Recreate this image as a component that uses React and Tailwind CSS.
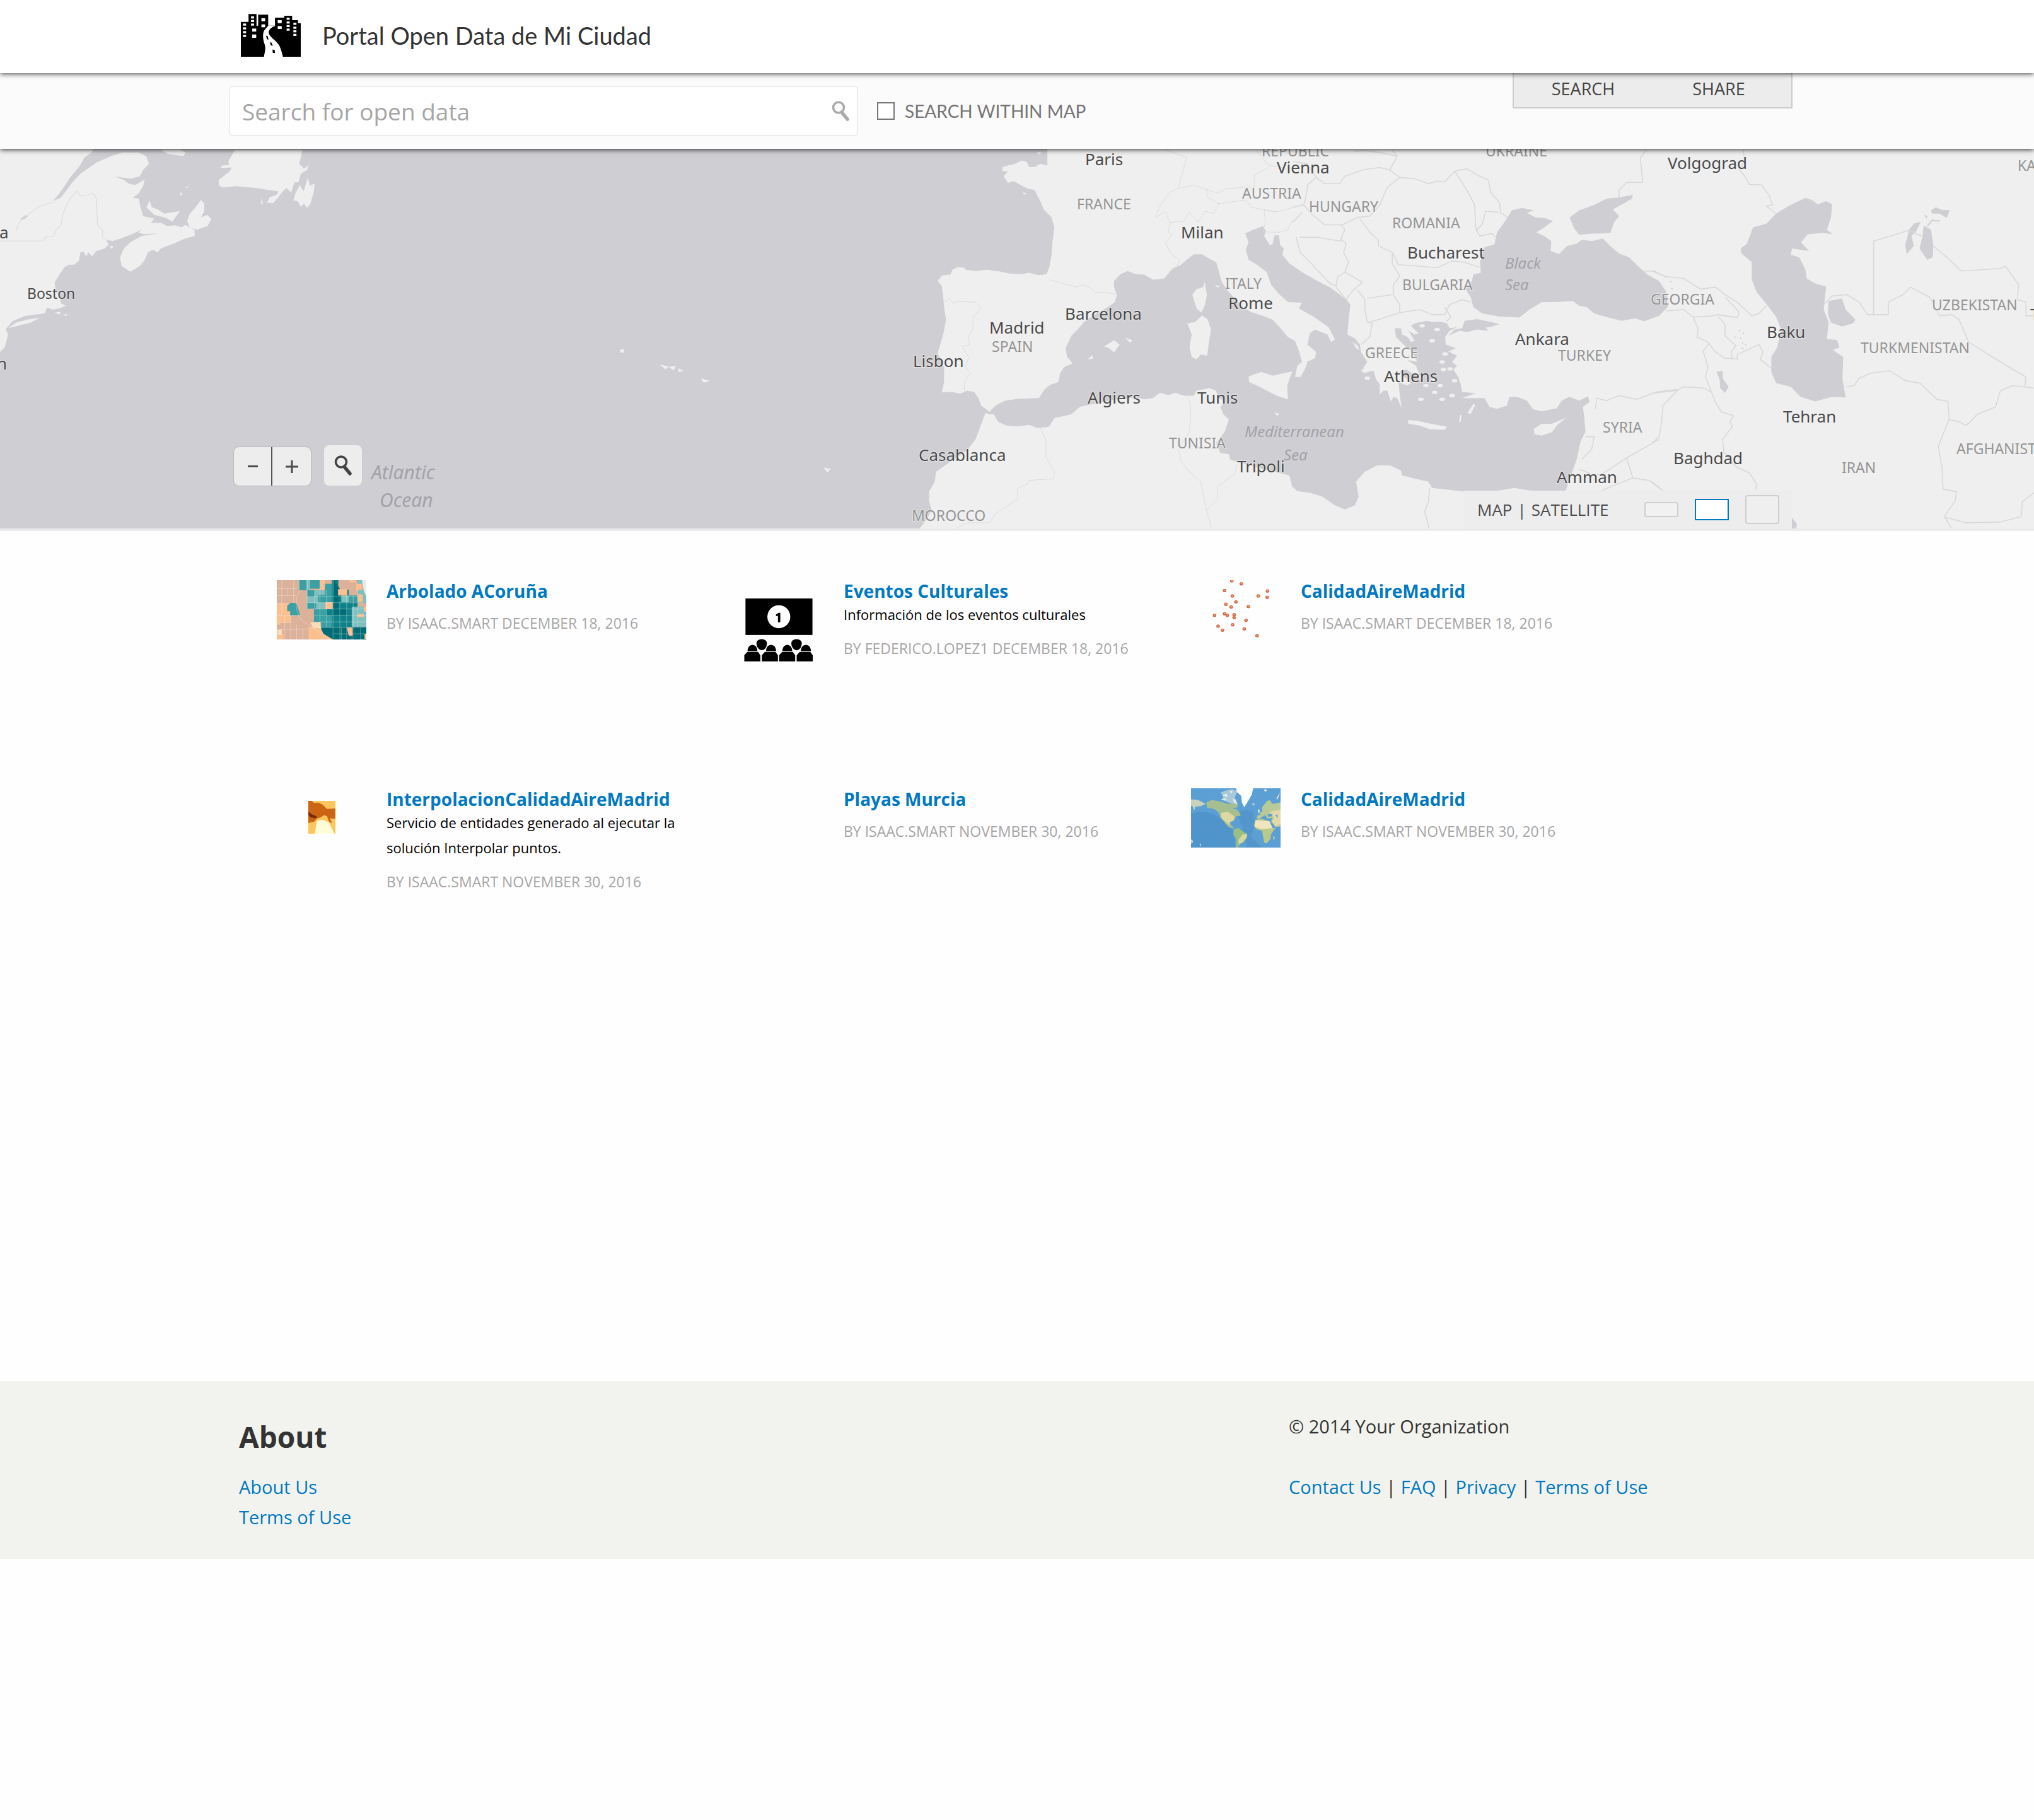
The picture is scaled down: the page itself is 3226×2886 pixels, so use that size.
import React from "react";

const BORDER = { fill: "none", stroke: "#d8d8da", strokeWidth: 2, strokeLinejoin: "round" };

function Logo() {
  const windows = [
    [94, 112], [94, 130], [94, 148], [94, 166],
    [120, 78], [120, 95], [120, 112],
    [124, 136, 13, 14], [124, 164, 13, 16],
    [154, 87, 12, 14], [154, 116, 12, 14],
    [207, 96, 13, 14], [207, 124, 13, 14],
    [236, 84], [236, 102], [236, 119], [236, 136],
    [258, 108], [258, 127], [258, 144], [258, 161],
  ];
  return (
    <svg className="h-[68px] w-[95px]" viewBox="87 66 195 204" preserveAspectRatio="none" role="img" aria-label="Mi Ciudad">
      <path d="M87 104H112V67H138V122H143V70H176V122H198V84H228V75H254V96H273V110H282V270H87Z" fill="#000" />
      <path d="M139 67V122H143V70Z" fill="#fff" />
      <path d="M176 122H200C182 132 173 148 180 165C188 185 205 195 213 220C219 238 221 255 224 270H162C165 245 170 230 163 205C158 180 157 150 167 138Z" fill="#fff" />
      {windows.map(([x, y, w = 10, h = 10]) => (
        <rect key={`${x}-${y}`} x={x} y={y} width={w} height={h} fill="#fff" />
      ))}
      <path d="M169 170L174 171L177 188L172 187ZM182 200L187 203L191 218L184 215ZM190 236L197 237L198 253L191 252Z" fill="#000" />
    </svg>
  );
}

function Magnifier({ className }) {
  return (
    <svg className={className} viewBox="0 0 28 32" fill="none" stroke="currentColor" aria-hidden="true">
      <circle cx="11" cy="10.500" r="8.500" strokeWidth="3.600" />
      <path d="M16 18L25 29" strokeWidth="5.500" strokeLinecap="round" />
    </svg>
  );
}

const CITIES = [
  ["Paris", 1721, 26], ["Milan", 1873, 142], ["Rome", 1948, 254], ["Madrid", 1569, 293],
  ["Barcelona", 1689, 271], ["Lisbon", 1448, 346], ["Algiers", 1725, 404], ["Tunis", 1899, 404],
  ["Casablanca", 1457, 495], ["Tripoli", 1962, 513], ["Vienna", 2025, 39], ["Bucharest", 2232, 174],
  ["Athens", 2195, 370], ["Ankara", 2403, 311], ["Amman", 2469, 530], ["Volgograd", 2645, 32],
  ["Baku", 2802, 300], ["Tehran", 2828, 434], ["Baghdad", 2654, 500], ["T", 3220, 272],
  ["a", -1, 142], ["n", -5, 350],
];

const COUNTRIES = [
  ["FRANCE", 1708, 96], ["ITALY", 1943, 222], ["SPAIN", 1573, 322], ["TUNISIA", 1854, 475],
  ["MOROCCO", 1446, 590], ["REPUBLIC", 2001, 12], ["AUSTRIA", 1970, 79], ["HUNGARY", 2076, 100],
  ["ROMANIA", 2208, 126], ["BULGARIA", 2224, 224], ["GREECE", 2165, 332], ["TURKEY", 2471, 336],
  ["SYRIA", 2542, 450], ["UKRAINE", 2356, 12], ["KA", 3200, 35], ["GEORGIA", 2618, 247],
  ["UZBEKISTAN", 3064, 256], ["TURKMENISTAN", 2951, 324], ["IRAN", 2921, 514], ["AFGHANIST", 3103, 484],
];

const WATERS = [
  ["Mediterranean", 1974, 457], ["Sea", 2036, 494], ["Black", 2387, 190], ["Sea", 2387, 224],
];

const AEGEAN = [
  [520, 725], [580, 740], [560, 785], [612, 838], [600, 870], [605, 900], [632, 898], [650, 945],
  [570, 992], [515, 1020], [600, 1020], [560, 945], [592, 965], [640, 1005], [535, 965], [288, 905], [300, 935],
];

const CASPIAN_DOTS = [[360, 745], [375, 755], [340, 770], [365, 775], [372, 795], [385, 800], [372, 815], [78, 548], [82, 575]];

/* Light grey canvas basemap. Each sheet carries its own grid, projected into map space by its group. */
function Basemap() {
  return (
    <svg className="absolute inset-0 h-full w-full" viewBox="0 0 3226 602" preserveAspectRatio="xMidYMid slice" role="img" aria-label="Map">
      <rect width="3226" height="602" fill="#cfced3" />

      {/* North American seaboard */}
      <g transform="translate(0 -6) scale(.5102 .3954)">
        <g fill="#efefef">
          <path d="M0 0L300 0L285 30L262 50L250 80L218 130L190 185L165 225L190 210L225 150L250 115L300 70L345 45L380 30L430 30L455 45L463 75L445 100L435 125L405 135L355 125L385 140L400 155L420 160L435 150L450 138L445 165L430 195L413 212L432 215L435 240L445 285L480 295L470 310L465 330L445 335L430 345L405 360L375 375L350 385L330 380L338 400L325 415L300 425L286 447L275 430L268 447L260 428L250 430L245 465L230 480L215 480L200 490L185 520L170 550L172 580L185 610L190 635L205 645L185 655L165 660L145 652L140 675L80 685L40 705L18 738L25 760L15 810L0 830Z" />
          <path d="M430 350L465 312L500 312L520 325L545 322L565 330L575 320L605 340L605 365L575 375L540 395L500 415L490 430L475 420L460 430L450 460L435 485L405 508L390 495L378 485L373 450L385 415L405 390L440 365L490 355L445 357Z" />
          <path d="M625 220L635 235L635 265L625 290L645 280L657 297L645 325L612 340L590 330L582 305L590 275L605 255Z" />
          <path d="M465 222L472 250L490 258L510 275L560 265L545 290L535 308L525 298L510 290L480 280L455 250Z" />
          <path d="M730 20L940 20L935 50L930 75L945 95L960 80L955 100L935 115L928 150L915 150L905 190L890 172L878 187L868 205L850 232L830 232L838 210L860 200L865 185L825 178L795 172L735 165L690 170L680 160L680 140L715 105L720 90L685 92L690 82L712 80L710 65Z" />
          <path d="M957 130L963 163L978 155L975 190L965 235L955 252L945 235L935 248L925 225L912 222L918 195L932 160L944 185Z" />
          <path d="M500 18L520 35L570 45L577 30L560 18Z" />
          <path d="M25 735L50 712L85 700L125 692L95 712L55 725ZM170 672L190 668L185 680ZM195 680L210 678L205 686ZM812 212L818 238L812 238ZM575 168L588 166L583 172ZM562 185L567 200L560 202ZM340 405L352 405L348 417Z" />
        </g>
        <path d="M62 298L78 282L88 284L75 298Z" fill="#cfced3" />
        <path d="M0 385L135 385L145 365L165 365L175 340L190 320L195 280L205 245L220 210L240 185L250 205L275 200L288 192L300 215L303 320L318 340L320 370L338 385M165 228L120 248L85 280L60 310L50 345" {...BORDER} />
      </g>

      {/* Azores and Madeira */}
      <g fill="#efefef">
        <path d="M984 318h6v5h-6zM1046 342l14 3-4 5zM1060 346l12-2-3 7zM1076 348l8 4-8 2zM1112 364l14 4-10 3zM1306 505l12 3-6 5z" />
      </g>

      {/* Western Mediterranean */}
      <g transform="translate(1400 -6) scale(.4464 .3954)">
        <g fill="#efefef">
          <path d="M585 0L585 82L560 75L540 88L520 88L512 68L495 62L470 75L425 88L425 105L445 105L430 125L445 152L465 145L490 160L515 175L540 180L550 205L560 225L572 258L600 290L610 330L603 390L600 440L592 490L582 518L555 522L520 512L495 518L450 515L420 508L370 500L330 505L295 500L290 492L265 490L248 500L240 520L212 522L195 545L210 565L215 610L218 650L225 700L215 760L195 835L218 890L218 950L210 992L245 990L275 997L300 985L325 990L340 1015L350 1045L380 1070L400 1045L435 1025L480 1018L555 1015L575 980L595 962L625 950L630 915L645 890L675 875L655 850L650 815L670 765L700 730L715 710L760 675L800 650L825 630L832 600L822 570L822 545L845 518L870 505L900 518L930 520L960 540L1000 535L1030 495L1060 480L1080 460L1105 438L1135 438L1160 455L1185 470L1195 510L1205 550L1230 590L1255 620L1280 650L1310 670L1350 685L1385 700L1410 730L1440 770L1465 785L1480 830L1490 870L1473 885L1465 930L1484 930L1500 900L1509 868L1536 855L1540 830L1509 800L1518 755L1536 740L1580 760L1593 790L1607 780L1584 730L1530 688L1478 655L1490 632L1440 630L1410 600L1380 560L1365 510L1330 480L1300 460L1290 420L1300 390L1288 355L1310 343L1350 325L1362 345L1355 365L1375 400L1385 398L1392 362L1408 362L1412 400L1425 415L1420 440L1445 475L1491 510L1545 545L1589 570L1589 0Z" />
          <path d="M380 1080L365 1075L350 1120L330 1180L300 1225L240 1270L190 1310L185 1350L165 1390L165 1430L175 1465L150 1510L130 1540L130 1568L1568 1568L1568 1415L1520 1400L1475 1390L1455 1370L1445 1325L1400 1312L1350 1300L1290 1280L1235 1262L1230 1240L1200 1235L1185 1195L1215 1150L1230 1100L1210 1080L1200 1050L1215 1030L1190 1010L1185 985L1160 975L1115 985L1105 1005L1070 1005L1040 993L1015 1003L985 993L960 1015L930 1020L900 1012L830 1020L760 1035L700 1050L670 1080L610 1095L590 1130L550 1135L520 1122L480 1128L440 1125L410 1110L395 1080Z" />
          <path d="M1143 548L1152 600L1145 640L1133 672L1115 655L1100 600L1115 578L1138 570Z" />
          <path d="M1135 683L1155 700L1166 740L1158 800L1153 845L1130 840L1115 860L1098 850L1090 810L1098 760L1082 715L1110 710Z" />
          <path d="M1300 928L1345 910L1385 925L1455 908L1437 965L1440 1020L1400 1005L1340 970L1302 950Z" />
          <path d="M787 808L822 783L842 800L822 832L805 815ZM860 772L887 782L880 793ZM728 860L745 843L747 857ZM1392 1072L1410 1078L1402 1086ZM1180 562L1200 565L1190 572ZM548 28L565 30L555 38ZM498 188L510 195L502 200Z" />
        </g>
        <path d="M590 540L640 555L690 570L710 560L740 575L755 590L780 590L830 598M218 630L238 616L250 635L265 628L330 630L350 655L322 690L320 740L305 770L308 800L285 808L305 850L295 890L312 915L290 950L290 985M1005 20L1080 50L1065 110L1050 172L1020 190L985 245L970 290L1005 268L1020 310L1015 350L1028 360L1005 390L1020 430L1055 465L1045 485M1050 175L1105 160L1150 178L1155 210L1195 235L1175 275L1145 265L1120 310L1090 270L1070 305L1020 310M1150 178L1190 193L1220 175L1280 170L1320 168L1320 120L1370 90M1195 235L1290 220L1310 250L1400 268L1490 240L1505 190L1540 140M1400 268L1355 262L1360 310L1350 348L1410 350L1440 340L1450 310L1500 270M1330 25L1370 80L1440 95L1500 70L1456 65M560 1135L580 1180L580 1250L610 1310L605 1338L520 1345L515 1360L480 1375L480 1420L400 1480L380 1515L300 1515L260 1538M1085 1010L1095 1050L1090 1150L1050 1220L1060 1270L1090 1310L1130 1350L1150 1465L1168 1535M1260 1280L1250 1320L1190 1370L1190 1420L1150 1465" {...BORDER} />
      </g>

      {/* Eastern Mediterranean and Black Sea */}
      <g transform="translate(2050 -6) scale(.3954)">
        <g fill="#efefef">
          <path d="M0 0L0 480L40 510L100 545L150 570L190 600L215 620L232 640L225 700L220 760L250 775L270 800L275 830L300 870L285 890L285 915L325 905L335 940L350 960L350 1000L365 985L380 985L395 1030L405 1010L420 1015L438 1055L430 1000L425 950L460 965L475 955L430 910L455 900L490 920L520 945L505 910L495 885L460 862L500 870L480 830L445 800L415 770L410 735L435 735L440 760L462 770L475 790L490 785L465 745L490 760L505 755L475 725L490 715L540 705L560 710L590 708L620 715L630 735L660 730L630 745L612 770L615 800L655 815L625 828L660 845L640 870L660 885L645 900L665 930L675 960L680 990L735 995L680 1015L770 1015L790 1050L820 1058L860 1045L870 1010L900 1010L940 1025L965 1060L1000 1068L1060 1055L1080 1025L1110 1010L1150 1025L1185 1008L1192 1030L1165 1050L1170 1090L1175 1150L1155 1190L1140 1260L1115 1330L1095 1390L950 1385L890 1375L800 1390L690 1390L650 1385L560 1375L545 1350L500 1340L440 1325L435 1305L390 1285L340 1285L290 1310L255 1350L265 1410L250 1445L210 1462L170 1445L120 1410L70 1395L0 1385L0 1568L1568 1568L1568 0Z" />
        </g>
        <path d="M0 480L35 510L100 545L175 590L232 640L225 700L222 765L285 850L285 915L340 960L300 1100L0 1000Z" fill="none" />
      </g>
      <rect x="2610" width="616" height="602" fill="#efefef" />
      <g transform="translate(2050 -6) scale(.3954)">
        <g fill="#efefef">
          <path d="M463 1103L500 1106L540 1115L620 1130L610 1142L550 1140L510 1125L465 1118Z" />
          <path d="M702 1075L725 1038L733 1042L715 1078ZM668 1110L672 1080L678 1085L674 1110ZM968 1138L1000 1118L1040 1118L1098 1093L1060 1125L1040 1152L1000 1165L970 1160ZM240 790L262 805L268 822L255 815Z" />
          {AEGEAN.map(([x, y]) => (
            <ellipse key={`${x}-${y}`} cx={x} cy={y} rx="11" ry="7" />
          ))}
        </g>
        <g fill="#cfced3">
          <path d="M880 262L920 252L968 262L940 272L975 290L1010 292L1045 305L1010 330L978 350L1010 365L1038 385L1035 425L1070 437L1100 405L1140 395L1160 380L1200 385L1245 375L1275 405L1310 435L1350 450L1390 490L1425 520L1470 545L1500 590L1505 650L1470 685L1410 707L1375 695L1320 705L1260 690L1210 675L1180 650L1150 645L1125 625L1060 630L1000 630L950 660L910 692L870 690L830 688L760 675L725 650L715 610L695 580L720 545L725 520L755 512L752 470L770 410L810 398L820 350L850 310Z" />
          <path d="M1112 290L1150 262L1210 240L1260 215L1310 210L1365 200L1362 215L1310 245L1285 258L1310 285L1290 310L1275 352L1235 355L1205 355L1150 360L1130 335Z" />
          <path d="M625 765L650 740L680 735L690 705L740 698L790 708L830 718L800 728L775 732L785 745L740 740L700 750L670 745Z" />
        </g>
        <path d="M245 25L290 22L350 30L420 45M1420 20L1395 50L1405 150L1340 150L1310 180L1310 210M390 100L430 130L490 135L545 155L580 145L610 148L650 105L700 95L740 120L785 140L795 190L830 230L835 270L860 290M650 105L680 150L710 200L730 240L735 330L750 365L800 355L815 370M735 345L760 320L775 265L830 270M95 130L60 160L55 200L45 240L80 280L130 320L200 320L260 290L310 285L350 240L380 170L430 130M0 65L60 75L95 130L130 155L190 155L210 125L280 100L350 90L390 100L420 45L400 20M0 250L45 240M0 310L40 270M270 295L310 350L345 380L345 405L400 430L425 480L500 485L580 492L640 465L690 470L750 490M400 430L400 475L430 525L405 560L405 600L430 640L430 672M30 370L100 370L190 385L210 340L195 320M15 370L30 430L80 480L150 555L175 565L180 530L210 510L225 470L205 430L215 395L195 380M175 570L215 620L240 585L280 550L210 510M260 580L290 620L290 660L300 710L320 715L310 770L275 800M300 615L400 600M430 672L360 695L310 710M430 672L510 660L560 680L610 680L630 640L680 620L715 630M610 650L635 690L615 710M1215 1060L1220 1015L1260 1025L1310 1005L1380 1020L1460 990L1545 980M1340 1255L1240 1320M1340 1255L1470 1180M1340 1255L1365 1335L1240 1385M1365 1335L1430 1345L1485 1385M1175 1170L1210 1170L1200 1220L1160 1260M1150 1300L1200 1320L1240 1320M550 1375L545 1430L530 1470L548 1540M1410 505L1450 505L1500 530" {...BORDER} strokeWidth={4} />
      </g>

      {/* Caspian and Central Asia */}
      <g transform="translate(2620 -6) scale(.3865 .3954)">
        <g fill="#cfced3">
          <path d="M630 212L660 222L680 238L715 225L740 238L735 290L718 340L742 358L700 352L640 358L612 390L645 425L575 415L570 440L605 450L630 500L635 535L670 555L715 568L710 610L705 660L725 710L718 778L760 782L770 812L742 822L785 850L782 940L795 1012L740 1010L670 1028L610 1010L570 970L510 955L490 910L490 850L515 810L530 740L510 690L480 650L430 590L410 540L410 470L365 432L365 415L390 395L415 330L470 315L510 275L560 245Z" />
          <path d="M725 625L780 615L795 660L835 700L825 715L780 728L735 712L722 680Z" />
          <path d="M1075 315L1103 308L1085 345L1065 365L1075 405L1045 437L1040 400L1055 340Z" />
          <path d="M1115 322L1145 340L1155 400L1152 450L1130 460L1098 415L1110 370Z" />
          <path d="M1145 262L1165 250L1190 260L1222 262L1210 292L1180 275L1150 275ZM1118 280L1132 285L1125 295Z" />
          <path d="M265 910L290 905L290 935L315 970L300 994L280 975L278 940Z" />
          <path d="M540 1460L572 1490L595 1520L592 1538L540 1538Z" />
          {CASPIAN_DOTS.map(([x, y]) => (
            <circle key={`${x}-${y}`} cx={x} cy={y} r="3" />
          ))}
        </g>
        <path d="M1130 325L1150 302L1182 305" {...BORDER} stroke="#cfced3" strokeWidth={5} />
        <path d="M375 20L380 60L360 100L385 130L400 158L450 160L480 200L495 240L470 245L510 275M0 505L60 528L130 535L200 578L260 570L300 600L350 630L410 685L440 675L470 645M60 665L130 660L170 690L250 685L270 680L350 692L358 670L335 645L300 610M170 690L190 740L185 770L230 790L260 830L300 855L350 858L350 840L440 800L455 830L445 860L490 895M270 685L300 720L300 765L345 805L325 830L330 858M235 795L210 825L230 890L220 930L240 980L260 1030L285 1070L335 1085L320 1110L330 1130L290 1180L295 1230L345 1290L400 1315L430 1360L425 1382M0 995L100 985L130 970L215 975L240 990M105 985L45 1045L40 1110L30 1170L0 1195M795 970L830 965L850 935L900 915L975 905L1040 945L1100 955L1170 1020L1215 1028L1220 1100L1195 1160L1175 1210L1190 1290L1195 1380L1250 1390L1245 1425L1200 1490L1228 1535M1220 1100L1260 1110L1290 1125L1335 1080L1410 1050L1430 985L1480 965L1530 970L1568 975M1530 970L1535 930L1430 870L1300 790L1260 700L1230 680L1180 685L1140 610L1060 570L1030 600L970 630L970 680L885 680L850 630L800 600L740 605L705 640M910 680L910 385L1055 342L1105 365M1155 405L1210 450L1270 505L1430 495L1450 485L1505 560L1500 620L1535 630L1535 685L1568 685M1200 1492L1290 1515L1430 1512L1515 1490L1520 1430L1568 1395M0 1350L45 1385" {...BORDER} strokeWidth={4} />
      </g>

      <g fontFamily="'Noto Sans', sans-serif" paintOrder="stroke" stroke="#f2f2f2" strokeOpacity=".7" strokeWidth="2">
        <g fill="#a3a3a8" stroke="none" fontStyle="italic" fontSize="24">
          {WATERS.map(([name, x, y]) => (
            <text key={`${name}-${x}`} x={x} y={y}>{name}</text>
          ))}
        </g>
        <g fill="#a3a3a8" stroke="none" fontStyle="italic" fontSize="30">
          <text x="589" y="524">Atlantic</text>
          <text x="602" y="568">Ocean</text>
        </g>
        <g fill="#949494" fontSize="23">
          {COUNTRIES.map(([name, x, y]) => (
            <text key={name} x={x} y={y}>{name}</text>
          ))}
        </g>
        <g fill="#4a4a4a" fontSize="26">
          {CITIES.map(([name, x, y]) => (
            <text key={name} x={x} y={y}>{name}</text>
          ))}
          <text x="43" y="238" fontSize="23">Boston</text>
        </g>
      </g>
    </svg>
  );
}

const BLOCKS = [
  ["#fcbf8f", "M83 150H140V270H83ZM83 215H118V300H83ZM83 270H165V310H83ZM140 112H158V132H140Z"],
  ["#dbb19a", "M83 112H140V215H83ZM130 112H185V160H130ZM148 155H185V240H228V268H165L155 230ZM95 300H190V375H95ZM130 270H175V310H130ZM295 112H350V155H295ZM245 112H275V130H245Z"],
  ["#fcbf8f", "M190 320L235 330L272 375H190ZM228 112H245V155H228ZM350 125H368V160H350ZM325 112H350V122H325ZM83 350H105V375H83Z"],
  ["#3ba0a3", "M158 112H183V157H158ZM195 112H228V150H195ZM245 128H272V215H245ZM118 225L128 213H148L162 268H128V250H118Z"],
  ["#7fc0bf", "M185 157H245V240H185ZM183 112H195V157H183ZM353 112H370V128H353ZM355 155H384V210H355Z"],
  ["#3ba0a3", "M185 157H210V185H185ZM222 178H250V212H222ZM185 212H215V238H185ZM208 240H270V322H232V297H208ZM320 180H355V300H320Z"],
  ["#0f8189", "M268 112H290V155H325V210H355V240H340V375H272L232 322H268V268H250V240H268Z"],
  ["#016c75", "M275 112L295 150L290 240H318V265H272V200ZM230 322H330V375H272L240 350ZM340 318H384V375H340Z"],
  ["#7fc0bf", "M335 230H384V318H335ZM300 180H325V210H300ZM372 160H384V215H372Z"],
  ["#fcbf8f", "M289 152H320V180H289ZM247 210H271V240H247ZM355 175H372V208H355ZM355 262H376V276H355ZM318 322H338V358H325ZM378 350H384V372H378ZM376 230H384V252H376Z"],
  ["#fbdcb8", "M195 300L228 297L232 328L205 322ZM85 330H100V355H85Z"],
  ["#e3edf0", "M370 112H384V185L376 160Z"],
];

function Choropleth() {
  return (
    <svg className="h-[94px] w-[142px]" viewBox="83 112 301 263" preserveAspectRatio="none" aria-hidden="true">
      <rect x="83" y="112" width="301" height="263" fill="#dbb19a" />
      {BLOCKS.map(([fill, d], i) => (
        <path key={i} d={d} fill={fill} />
      ))}
      <path d="M83 150H150M83 180H148M83 215H128M83 270H165M83 300H130M100 112V215M120 150V180M140 112V215M100 215V270M110 270V375M130 270V375M150 310V375M170 330V375M95 330H190M185 112V240M210 157V240M228 112V297M250 155V320M272 112V375M295 210V375M318 180V375M340 180V320M355 155V320M185 185H355M185 212H355M208 240H384M208 268H384M230 297H384M190 322H384M272 350H384M158 112V157M147 213Q150 290 190 310L260 375M162 157Q145 185 150 215M300 322V375M365 320V375" fill="none" stroke="#fff" strokeOpacity=".4" strokeWidth="2" />
    </svg>
  );
}

function Audience() {
  return (
    <svg className="mt-[29px] h-[100px] w-[110px]" viewBox="87 194 233 280" preserveAspectRatio="none" aria-hidden="true">
      <rect x="92" y="194" width="225" height="162" fill="#000" />
      <ellipse cx="204" cy="275" rx="38.500" ry="51" fill="#fff" />
      <path d="M194 266L203 258H209V300H201V270L195 273Z" fill="#000" />
      {[0, 117].map((dx) => (
        <g key={dx} transform={`translate(${dx} 0)`}>
          <path d="M129 393C129 368 164 368 164 393C164 408 158 423 147 424C136 423 129 408 129 393Z" />
          <path d="M99 428C99 390 132 390 132 428ZM161 428C161 390 195 390 195 428Z" />
          <path d="M88 473V446L98 431H134L142 446V473ZM147 473V446L157 431H193L201 446V473Z" />
        </g>
      ))}
    </svg>
  );
}

const STATIONS = [
  [198, 115], [230, 128], [174, 158], [318, 160], [200, 182], [287, 182], [317, 188], [212, 208], [178, 219], [196, 231],
  [254, 229], [174, 261], [183, 268], [140, 268], [206, 265], [206, 278], [246, 290], [201, 310], [152, 316], [167, 334],
  [240, 328], [283, 358],
];

function Stations() {
  return (
    <svg className="h-[94px] w-[142px]" viewBox="61 112 301 263" preserveAspectRatio="none" aria-hidden="true">
      {STATIONS.map(([x, y]) => (
        <g key={`${x}-${y}`}>
          <ellipse cx={x} cy={y} rx="6" ry="7.500" fill="#cf6a48" />
          <ellipse cx={x} cy={y - 1} rx="2.500" ry="3" fill="#f7b08c" />
        </g>
      ))}
    </svg>
  );
}

function Interpolation() {
  return (
    <svg className="mt-[20px] h-[52px] w-[43px]" viewBox="193 1092 90 146" preserveAspectRatio="none" aria-hidden="true">
      <rect x="193" y="1092" width="90" height="146" fill="#fdc55c" />
      <path d="M193 1092H205L212 1102L225 1100L240 1108L255 1128L283 1126V1172L265 1170L272 1192L262 1185L255 1160L245 1155L235 1165L222 1170L212 1185L193 1190Z" fill="#cb6413" />
      <path d="M193 1140L205 1152L220 1160V1170L200 1165L193 1155Z" fill="#7a2c08" />
      <path d="M222 1180L240 1176L262 1188L275 1225L280 1238H214Z" fill="#fffdd8" />
    </svg>
  );
}

function WorldMap() {
  return (
    <svg className="h-[94px] w-[142px]" viewBox="61 1036 301 263" preserveAspectRatio="none" aria-hidden="true">
      <rect x="61" y="1036" width="301" height="263" fill="#5b9fd4" />
      <path d="M61 1150Q100 1125 150 1160L200 1215L210 1299H61Z" fill="#4f94cb" />
      <path d="M215 1150Q240 1120 270 1140L275 1200L262 1250L300 1299H250L235 1210Z" fill="#5396cc" />
      <path d="M61 1085L85 1088L110 1105L95 1115L75 1118L72 1135L66 1115L61 1115Z" fill="#c9d3bb" />
      <path d="M112 1100L130 1088L160 1095L185 1105L215 1100L218 1120L200 1125L215 1130L225 1145L228 1158L212 1160L205 1180L192 1185L195 1200L205 1210L200 1215L185 1205L172 1185L160 1165L155 1145L140 1128L115 1122Z" fill="#a5bf91" />
      <path d="M162 1145L185 1140L208 1162L203 1180L190 1187L190 1200L175 1182L162 1165Z" fill="#ddd9a3" />
      <path d="M160 1055L180 1045L200 1040L218 1050L208 1075L215 1095L205 1105L185 1098L165 1088L170 1070Z" fill="#a9c8da" />
      <path d="M165 1068L180 1060L185 1075ZM190 1050L200 1045L198 1060ZM200 1080L212 1090L218 1110L205 1098ZM160 1085L178 1080L182 1090Z" fill="#e3ece9" />
      <path d="M212 1036H270L265 1065L252 1095L240 1120L232 1100L230 1070L215 1052Z" fill="#fdfefe" />
      <path d="M265 1105L275 1103L273 1112ZM285 1132L290 1128L293 1142L287 1145Z" fill="#d7e2cf" />
      <path d="M205 1218L220 1212L235 1228L250 1238L248 1255L238 1275L228 1280L218 1299H212L214 1265L203 1240Z" fill="#9bbf83" />
      <path d="M235 1240L250 1240L248 1255L235 1275L222 1285L220 1265Z" fill="#d4d9a0" />
      <path d="M278 1175L300 1172L325 1182L335 1212H345L330 1240L328 1262L315 1280L307 1278L303 1248L300 1225L280 1218L272 1200Z" fill="#b8c98c" />
      <path d="M278 1178L325 1182L335 1212L300 1218L275 1208Z" fill="#efe5bf" />
      <path d="M338 1245L343 1255L338 1268Z" fill="#cfd6a0" />
      <path d="M300 1120L315 1095L325 1088L335 1105L362 1098V1205L345 1208L330 1182L335 1168L318 1170L310 1155L298 1165L292 1172L282 1170L284 1158L296 1152L288 1148L300 1140Z" fill="#b7ca97" />
      <path d="M325 1140L362 1130V1195L345 1205L332 1182L340 1168Z" fill="#e3d9a8" />
      <path d="M318 1152L335 1150L333 1160L320 1162ZM345 1155L352 1152L352 1170Z" fill="#5b9fd4" />
      <path d="M348 1080L360 1055L355 1075L350 1088ZM305 1040L318 1044L310 1052ZM61 1262L68 1270L63 1285ZM90 1285L95 1280L92 1296Z" fill="#dfe9e4" />
    </svg>
  );
}

const ITEMS = [
  { title: "Arbolado ACoruña", meta: "BY ISAAC.SMART DECEMBER 18, 2016", Thumb: Choropleth },
  { title: "Eventos Culturales", text: "Información de los eventos culturales", meta: "BY FEDERICO.LOPEZ1 DECEMBER 18, 2016", Thumb: Audience },
  { title: "CalidadAireMadrid", meta: "BY ISAAC.SMART DECEMBER 18, 2016", Thumb: Stations },
  { title: "InterpolacionCalidadAireMadrid", text: "Servicio de entidades generado al ejecutar la solución Interpolar puntos.", meta: "BY ISAAC.SMART NOVEMBER 30, 2016", Thumb: Interpolation },
  { title: "Playas Murcia", meta: "BY ISAAC.SMART NOVEMBER 30, 2016" },
  { title: "CalidadAireMadrid", meta: "BY ISAAC.SMART NOVEMBER 30, 2016", Thumb: WorldMap },
];

function Item({ title, text, meta, Thumb }) {
  return (
    <article className="flex h-[330px] items-start gap-8">
      <div className="flex w-[142px] shrink-0 justify-center">{Thumb && <Thumb />}</div>
      <div className="w-[460px]">
        <h2 className="text-[28px] leading-[34px] font-bold text-[#0079c1]">
          <a href="#item">{title}</a>
        </h2>
        {text && <p className="text-[22px] leading-[40px] text-black">{text}</p>}
        <p className="pt-[14px] text-[23px] leading-[40px] whitespace-nowrap text-[#a6a6a6]">{meta}</p>
      </div>
    </article>
  );
}

export default function App() {
  return (
    <div className="min-h-screen bg-[#fefefe] font-['Open_Sans',sans-serif]">
      <header className="relative z-30 bg-white shadow-[0_1px_8px_rgba(0,0,0,0.75)]">
        <div className="mx-auto flex h-[116px] max-w-[2500px] items-center gap-[34px] px-[19px] pb-1">
          <Logo />
          <h1 className="font-['Lato',sans-serif] text-[38px] leading-[48px] text-[#333]">Portal Open Data de Mi Ciudad</h1>
        </div>
      </header>

      <div className="relative z-20 bg-[#fbfbfb] shadow-[0_1px_8px_rgba(0,0,0,0.85)]">
        <div className="mx-auto flex h-[120px] max-w-[2500px] items-start">
          <form className="flex items-center gap-[30px] pt-5" onSubmit={(e) => e.preventDefault()}>
            <div className="flex h-[80px] w-[998px] items-center rounded-md border-2 border-[#ececec] bg-white pr-3 pl-[19px]">
              <input
                type="text"
                aria-label="Search for open data"
                placeholder="Search for open data"
                className="h-full min-w-0 flex-1 bg-transparent text-[37px] text-[#333] outline-none placeholder:text-[#a6a6a6]"
              />
              <button type="submit" aria-label="Search" className="text-[#aaa]">
                <Magnifier className="h-8 w-7" />
              </button>
            </div>
            <label className="flex items-center gap-4 font-['Lato',sans-serif] text-[28px] leading-[40px] text-[#757575]">
              <input type="checkbox" className="size-7 appearance-none border-2 border-[#777] bg-white" />
              SEARCH WITHIN MAP
            </label>
          </form>
          <nav className="mr-[20px] ml-auto flex h-[56px] w-[444px] border-2 border-t-0 border-[#ccc] bg-[#ececec] text-[27px] leading-[50px] text-[#444]">
            <button type="button" className="w-[220px] pb-2">SEARCH</button>
            <button type="button" className="w-[210px] pb-2">SHARE</button>
          </nav>
        </div>
      </div>

      <section className="relative z-10 border-b-4 border-[#ececee]" aria-label="Map">
        <div className="relative h-[602px] overflow-hidden">
          <Basemap />
          <div className="relative mx-auto flex h-full max-w-[2500px] items-end justify-between pr-[21px] pl-[8px]">
            <div className="mb-[68px] flex items-end gap-[21px] text-[#4c4c4c]">
              <div className="flex h-[61px] rounded-lg bg-[#ededed] shadow-[0_0_2px_rgba(0,0,0,0.3)]">
                <button type="button" aria-label="Zoom out" className="flex w-[61px] items-center justify-center border-r-2 border-[#555]">
                  <span className="h-[3px] w-4 bg-[#4c4c4c]" />
                </button>
                <button type="button" aria-label="Zoom in" className="flex w-[61px] items-center justify-center">
                  <svg className="size-5" viewBox="0 0 20 20" stroke="currentColor" strokeWidth="3" aria-hidden="true">
                    <path d="M10 0V20M0 10H20" />
                  </svg>
                </button>
              </div>
              <button type="button" aria-label="Find a place" className="flex h-[64px] w-[60px] items-center justify-center rounded-lg bg-[#ededed] text-[#444]">
                <Magnifier className="h-8 w-7" />
              </button>
            </div>
            <div className="flex h-[60px] w-[520px] items-center bg-[#ededed] pl-[21px] text-[26px] text-[#4c4c4c]">
              <div className="flex w-[265px] gap-2">
                <button type="button">MAP</button>
                <span>|</span>
                <button type="button">SATELLITE</button>
              </div>
              <div className="flex items-center gap-[26px]">
                <button type="button" aria-label="Small map" className="h-6 w-[54px] rounded border-2 border-[#cfcfcf] bg-[#f1f1f1]" />
                <button type="button" aria-label="Medium map" className="h-[34px] w-[54px] border-2 border-[#0079c1] bg-white" />
                <button type="button" aria-label="Large map" className="h-[46px] w-[54px] rounded border-2 border-[#cfcfcf] bg-[#efefef]" />
              </div>
            </div>
          </div>
        </div>
      </section>

      <main className="mx-auto min-h-[1348px] max-w-[2500px] pt-[78px] pr-[249px] pl-[76px]">
        <div className="grid grid-cols-3">
          {ITEMS.map((item, i) => (
            <Item key={i} {...item} />
          ))}
        </div>
      </main>

      <footer className="bg-[#f2f3ee] text-[29px] leading-[48px] text-[#333]">
        <div className="mx-auto flex h-[282px] max-w-[2500px] px-4">
          <div className="w-[1665px] pt-[56px]">
            <h2 className="text-[46px] leading-[64px] font-bold">About</h2>
            <ul className="pt-[24px] text-[#0079c1]">
              <li><a href="#about">About Us</a></li>
              <li><a href="#terms">Terms of Use</a></li>
            </ul>
          </div>
          <div className="pt-[48px]">
            <p>© 2014 Your Organization</p>
            <p className="pt-12">
              <a className="text-[#0079c1]" href="#contact">Contact Us</a> | <a className="text-[#0079c1]" href="#faq">FAQ</a> |{" "}
              <a className="text-[#0079c1]" href="#privacy">Privacy</a> | <a className="text-[#0079c1]" href="#terms">Terms of Use</a>
            </p>
          </div>
        </div>
      </footer>
    </div>
  );
}
